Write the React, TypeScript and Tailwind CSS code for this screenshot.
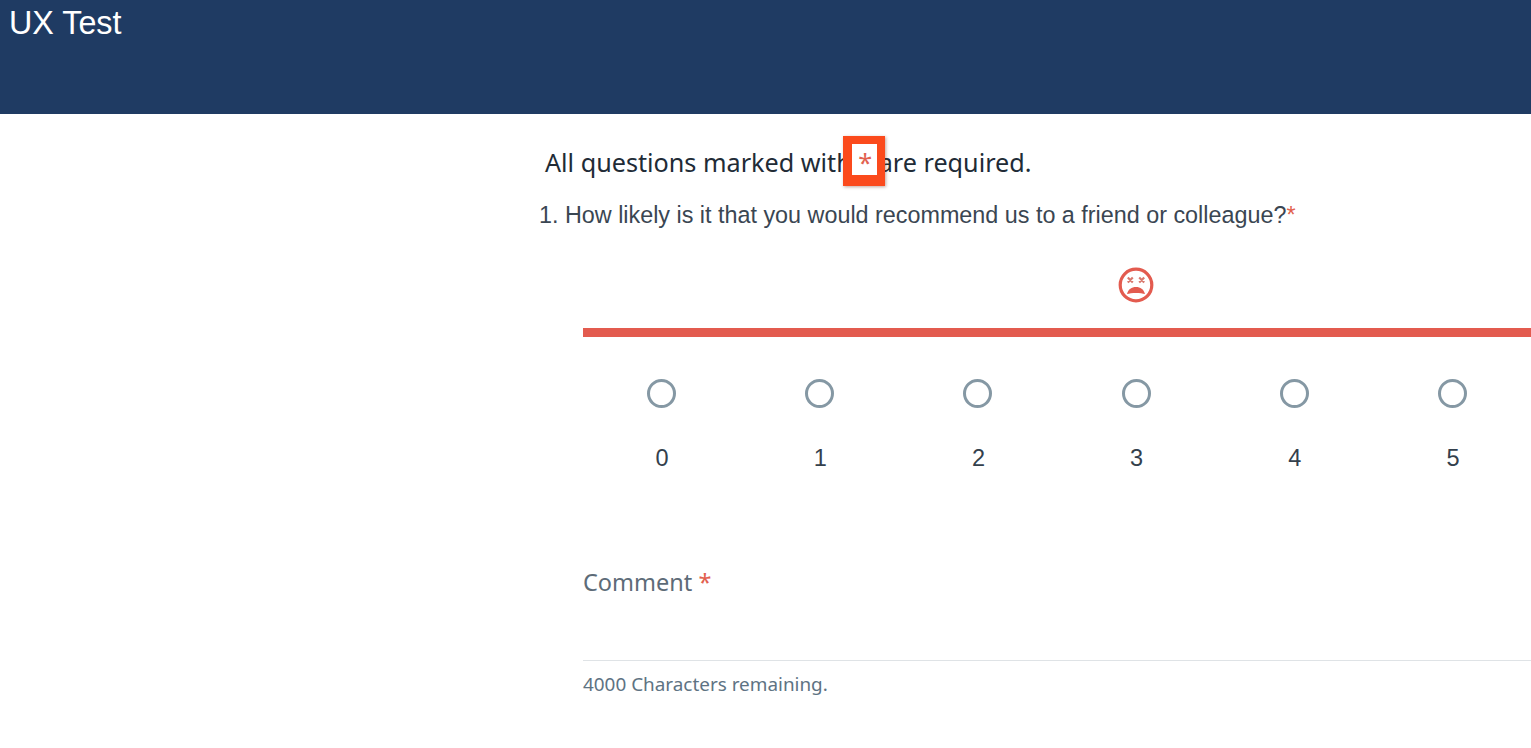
const sans = "font-['Liberation_Sans',Arial,sans-serif]";
const noto = "font-['Noto_Sans','Open_Sans',sans-serif]";

const scores = [0, 1, 2, 3, 4, 5];

function SadFace() {
  return (
    <svg width="36" height="36" viewBox="0 0 36 36" fill="none">
      <circle cx="18" cy="18" r="15.8" stroke="#e35b4f" strokeWidth="3.2" />
      <path
        d="M9.800 10.500l5 5M14.800 10.500l-5 5M21.200 10.500l5 5M26.200 10.500l-5 5"
        stroke="#d9796e"
        strokeWidth="2.200"
      />
      <path d="M9 27c1.500-5 4.500-7 9-7s7.500 2 9 7c-4-1.500-14-1.500-18 0z" fill="#e35b4f" />
    </svg>
  );
}

export default function App() {
  return (
    <div className={`w-[1531px] h-[748px] overflow-hidden bg-white ${sans}`}>
      {/* Header */}
      <div className="h-[114px] bg-[#1f3b63] pl-[9px] pt-[3px]">
        <h1 className="text-[32.3px] leading-[40px] text-white">UX Test</h1>
      </div>

      {/* Survey */}
      <div className="pl-[539px] pt-[32px]">
        <p className={`pl-[6px] text-[25.2px] leading-[32px] text-[#212b36] ${noto}`}>
          All questions marked with{" "}
          <span className="relative text-[#e2614f]">
            *
            <span className="absolute left-[-15px] top-[-9px] w-[42px] h-[50px] border-t-[8px] border-l-[9px] border-r-[8px] border-b-[11px] border-[#fb4a1c] shadow-[1px_1px_3px_rgba(120,60,40,0.45)]" />
          </span>{" "}
          are required.
        </p>
        <p className="mt-[22px] text-[23.35px] leading-[30px] text-[#3a4652]">
          1. How likely is it that you would recommend us to a friend or colleague?
          <span className="text-[#e2614f]">*</span>
        </p>

        <div className="ml-[44px] w-[949px]">
          <div className="mt-[37px] grid grid-cols-[repeat(6,158.2px)]">
            <div className="col-start-4 flex justify-center pr-[1px]">
              <SadFace />
            </div>
          </div>
          <div className="mt-[25px] h-[9px] bg-[#e35b4f]" />
          <div className="mt-[42px] grid grid-cols-[repeat(6,158.2px)]">
            {scores.map((n) => (
              <div key={n} className="flex flex-col items-center">
                <div className="mr-[1px] w-[29px] h-[29px] rounded-full border-[3px] border-[#8598a4]" />
                <span className="mt-[35px] text-[23.5px] leading-[30px] text-[#33404c]">{n}</span>
              </div>
            ))}
          </div>

          <label className={`block mt-[94px] text-[23.5px] leading-[30px] text-[#5d6b78] ${noto}`}>
            Comment <span className="text-[#e2614f]">*</span>
          </label>
          <div className="mt-[63px] border-t border-[#dfe3e6]" />
          <p className={`mt-[11px] text-[18.9px] leading-[24px] text-[#5e7383] ${noto}`}>
            4000 Characters remaining.
          </p>
        </div>
      </div>
    </div>
  );
}
